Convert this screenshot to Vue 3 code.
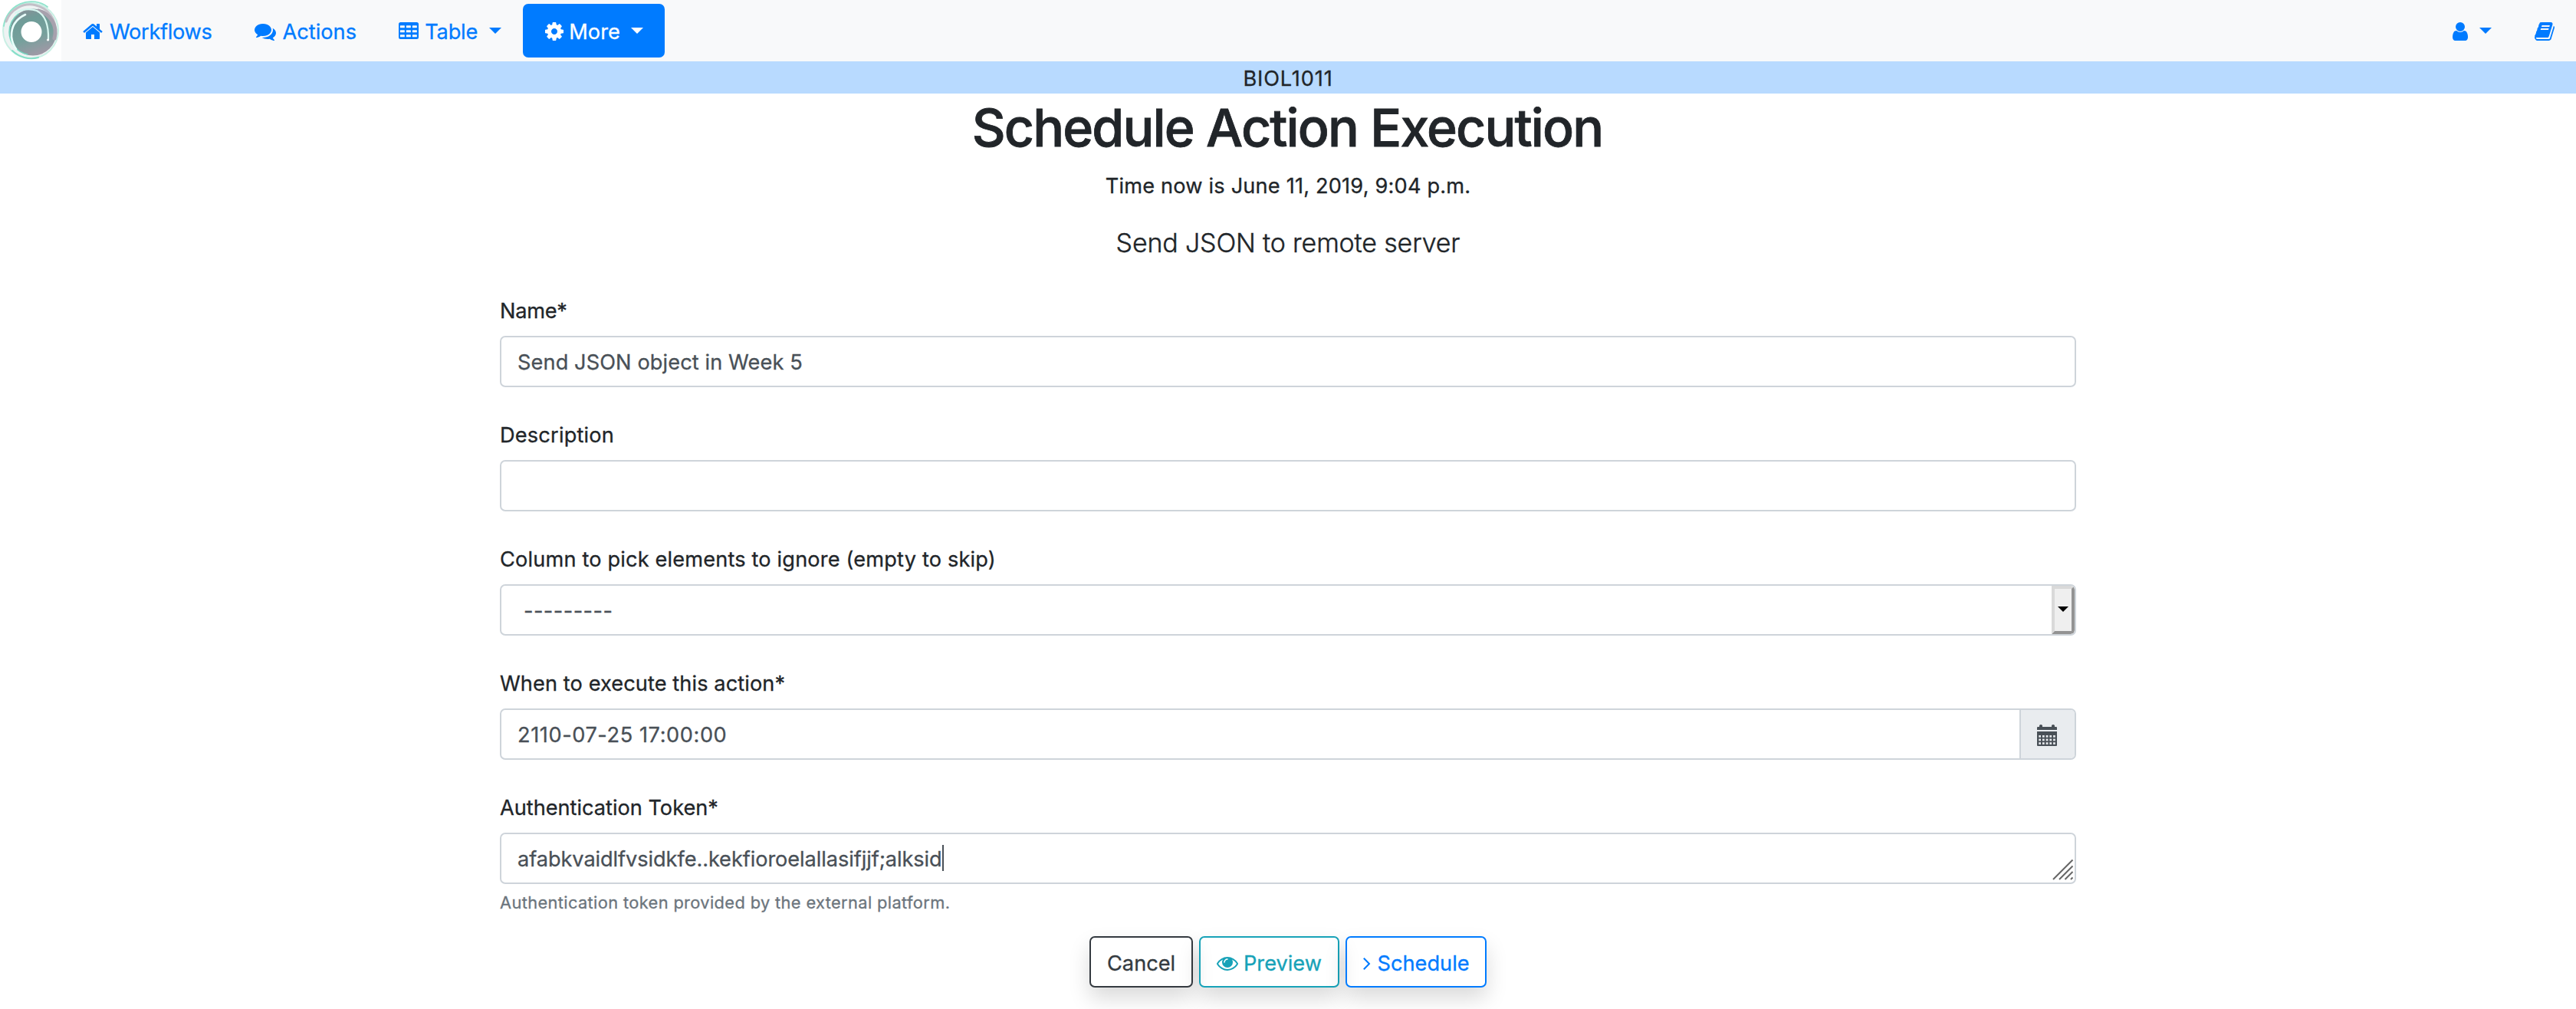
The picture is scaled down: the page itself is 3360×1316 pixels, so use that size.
<script setup>
import { ref } from 'vue'

const icons = {
  home: 'M1472 992v480q0 26-19 45t-45 19h-384v-384h-256v384h-384q-26 0-45-19t-19-45v-480q0-1 .5-3t.5-3l575-474 575 474q1 2 1 6zm223-69l-62 74q-8 9-21 11h-3q-13 0-21-7l-692-577-692 577q-12 8-24 7-13-2-21-11l-62-74q-8-10-7-23.5t11-21.5l719-599q32-26 76-26t76 26l244 204v-195q0-14 9-23t23-9h192q14 0 23 9t9 23v408l219 182q10 8 11 21.5t-7 23.5z',
  comments: 'M1408 768q0 139-94 257t-256.5 186.5-353.5 68.5q-86 0-176-16-124 88-278 128-36 9-86 16h-3q-11 0-20.5-8t-11.5-21q-1-3-1-6.5t.5-6.5 2-6l2.5-5 3.5-5.5 4-5 4.5-5 4-4.5q5-6 23-25t26-29.5 22.5-29 25-38.5 20.5-44q-124-72-195-177t-71-224q0-139 94-257t256.5-186.5 353.5-68.5 353.5 68.5 256.5 186.5 94 257zm384 256q0 120-71 224.5t-195 176.5q10 24 20.5 44t25 38.5 22.5 29 26 29.5 23 25q1 1 4 4.5t4.5 5 4 5 3.5 5.5l2.5 5 2 6 .5 6.5-1 6.5q-3 14-13 22t-22 7q-50-7-86-16-154-40-278-128-90 16-176 16-271 0-472-132 58 4 88 4 161 0 309-45t264-129q125-92 192-212t67-254q0-77-23-152 129 71 204 178t75 230z',
  cog: 'M1152 896q0-106-75-181t-181-75-181 75-75 181 75 181 181 75 181-75 75-181zm512-109v222q0 12-8 23t-20 13l-185 28q-19 54-39 91 35 50 107 138 10 12 10 25t-9 23q-27 37-99 108t-94 71q-12 0-26-9l-138-108q-44 23-91 38-16 136-29 186-7 28-36 28h-222q-14 0-24.5-8.5t-11.5-21.5l-28-184q-49-16-90-37l-141 107q-10 9-25 9-14 0-25-11-126-114-165-168-7-10-7-23 0-12 8-23 15-21 51-66.5t54-70.5q-27-50-41-99l-183-27q-13-2-21-12.5t-8-23.5v-222q0-12 8-23t19-13l186-28q14-46 39-92-40-57-107-138-10-12-10-24 0-10 9-23 26-36 98.500-107.500t94.500-71.500q13 0 26 10l138 107q44-23 91-38 16-136 29-186 7-28 36-28h222q14 0 24.500 8.500t11.500 21.500l28 184q49 16 90 37l142-107q9-9 24-9 13 0 25 10 129 119 165 170 7 8 7 22 0 12-8 23-15 21-51 66.500t-54 70.500q26 50 41 98l183 28q13 2 21 12.500t8 23.500z',
  user: 'M1536 1399q0 109-62.500 187t-150.500 78h-854q-88 0-150.500-78t-62.500-187q0-85 8.500-160.500t31.500-152 58.500-131 94-89 134.500-34.500q131 128 313 128t313-128q76 0 134.500 34.500t94 89 58.500 131 31.500 152 8.500 160.500zm-256-887q0 159-112.500 271.500t-271.500 112.500-271.500-112.500-112.500-271.500 112.500-271.500 271.500-112.500 271.500 112.500 112.500 271.500z',
  book: 'M1703 478q40 57 18 129l-275 906q-19 64-76.500 107.500t-122.500 43.500h-923q-77 0-148.500-53.500t-99.500-131.500q-24-67-2-127 0-4 3-27t4-37q1-8-3-21.500t-3-19.500q2-11 8-21t16.500-23.500 16.500-23.500q23-38 45-91.500t30-91.500q3-10 .5-30t-.5-28q3-11 17-28t17-23q21-36 42-92t25-90q1-9-2.500-32t.5-28q4-13 22-30.500t22-22.500q19-26 42.500-84.500t27.500-96.500q1-8-3-25.500t-2-26.500q2-8 9-18t18-23 17-21q8-12 16.500-30.500t15-35 16-36 19.500-32 26.500-23.500 36-11.500 47.500 5.500l-1 3q38-9 51-9h761q74 0 114 56t18 130l-274 906q-36 119-71.500 153.500t-128.500 34.500h-869q-27 0-38 15-11 16-1 43 24 70 144 70h923q29 0 56-15.500t35-41.500l300-987q7-22 5-57 38 15 59 43zm-1064 2q-4 13 2 22.500t20 9.500h608q13 0 25.500-9.500t16.500-22.500l21-64q4-13-2-22.500t-20-9.500h-608q-13 0-25.500 9.500t-16.500 22.500zm-83 256q-4 13 2 22.500t20 9.500h608q13 0 25.500-9.500t16.500-22.500l21-64q4-13-2-22.500t-20-9.500h-608q-13 0-25.500 9.500t-16.500 22.500z',
  eye: 'M1664 960q-152-236-381-353 61 104 61 225 0 185-131.500 316.500t-316.500 131.500-316.500-131.500-131.500-316.500q0-121 61-225-229 117-381 353 133 205 333.500 326.500t434.500 121.500 434.500-121.500 333.500-326.500zm-720-384q0-20-14-34t-34-14q-125 0-214.500 89.500t-89.500 214.500q0 20 14 34t34 14 34-14 14-34q0-86 61-147t147-61q20 0 34-14t14-34zm848 384q0 34-20 69-140 230-376.500 368.500t-499.500 138.500-499.500-139-376.500-368q-20-35-20-69t20-69q140-229 376.500-368t499.500-139 499.500 139 376.500 368q20 35 20 69z',
  angle: 'M1171 960q0 13-10 23l-466 466q-10 10-23 10t-23-10l-50-50q-10-10-10-23t10-23l393-393-393-393q-10-10-10-23t10-23l50-50q10-10 23-10t23 10l466 466q10 10 10 23z',
}

// Table glyph: rounded frame with a 3 x 3 grid of cut-out cells
const cell = (x, y) => `M${x + 32} ${y}h320q32 0 32 32v128q0 32-32 32h-320q-32 0-32-32v-128q0-32 32-32z`
const cells = [192, 704, 1216].flatMap((x) => [384, 768, 1152].map((y) => cell(x - 10, y + 20))).join('')
icons.table = 'M224 128h1344q160 0 160 160v1088q0 160-160 160h-1344q-160 0-160-160v-1088q0-160 160-160z' + cells

const name = ref('Send JSON object in Week 5')
const when = ref('2110-07-25 17:00:00')
const token = ref('afabkvaidlfvsidkfe..kekfioroelallasifjjf;alksid')
</script>

<template>
  <div class="page">
    <nav class="navbar">
      <svg class="logo" viewBox="0 0 80 80">
        <defs>
          <linearGradient id="disc" x1="0.25" y1="0" x2="0.6" y2="1">
            <stop offset="0" stop-color="#8b8f98" />
            <stop offset="0.25" stop-color="#6f9c98" />
            <stop offset="0.62" stop-color="#76a09c" />
            <stop offset="1" stop-color="#a198a6" />
          </linearGradient>
          <filter id="soft" x="-20%" y="-20%" width="140%" height="140%">
            <feGaussianBlur stdDeviation="0.7" />
          </filter>
        </defs>
        <rect width="80" height="80" fill="#fff" />
        <g filter="url(#soft)" fill="none" stroke-linecap="round">
          <circle cx="40" cy="40" r="36" fill="#eef3f3" stroke="#c9efe4" stroke-width="2" />
          <path d="M5 34A36 36 0 0 1 62 9" stroke="#8fe3cc" stroke-width="1.800" />
          <path d="M16 66A36 36 0 0 0 50 75" stroke="#86dfc9" stroke-width="2" />
          <path d="M8 28A33 33 0 0 1 72 42" stroke="#c3bfc7" stroke-width="3" />
          <circle cx="43" cy="42" r="30.500" fill="url(#disc)" />
          <path d="M50 14A29 29 0 0 1 71 50" stroke="#a7a1ad" stroke-width="5" />
          <path d="M36 71A30 30 0 0 1 12 42A30 30 0 0 1 24 18" stroke="#74d6c0" stroke-width="1.500" />
          <path d="M33 19Q14 28 15 48Q16 57 21 64" stroke="#e9fffb" stroke-width="2.600" />
          <path d="M20 17Q34 9 48 14Q64 22 63 52" stroke="#d7f7f0" stroke-width="2.200" />
          <circle cx="62.500" cy="52" r="1.500" fill="#fff" />
          <circle cx="41" cy="41.500" r="13.500" fill="#fff" />
        </g>
      </svg>
      <a class="item workflows">
        <svg class="icon" viewBox="0 0 1792 1792"><path :d="icons.home" /></svg>
        <span class="text">Workflows</span>
      </a>
      <a class="item actions">
        <svg class="icon" viewBox="0 0 1792 1792"><path :d="icons.comments" /></svg>
        <span class="text">Actions</span>
      </a>
      <a class="item table">
        <svg class="icon" viewBox="0 0 1792 1792"><path fill-rule="evenodd" :d="icons.table" /></svg>
        <span class="text">Table</span>
        <i class="caret"></i>
      </a>
      <a class="item more">
        <svg class="icon" viewBox="0 0 1792 1792"><path :d="icons.cog" /></svg>
        <span class="text">More</span>
        <i class="caret"></i>
      </a>
      <a class="item user">
        <svg class="icon" viewBox="0 0 1792 1792"><path :d="icons.user" /></svg>
        <i class="caret"></i>
      </a>
      <a class="item book">
        <svg class="icon" viewBox="0 0 1792 1792"><path :d="icons.book" /></svg>
      </a>
    </nav>

    <div class="workflow-name">BIOL1011</div>

    <h1>Schedule Action Execution</h1>
    <p class="now">Time now is June 11, 2019, 9:04 p.m.</p>
    <p class="lead">Send JSON to remote server</p>

    <form class="form">
      <div class="group">
        <label class="l-name">Name*</label>
        <div class="control v-name">{{ name }}</div>
      </div>
      <div class="group">
        <label class="l-desc">Description</label>
        <div class="control"></div>
      </div>
      <div class="group">
        <label class="l-col">Column to pick elements to ignore (empty to skip)</label>
        <div class="control select">
          <span>---------</span>
          <div class="drop"><i></i></div>
        </div>
      </div>
      <div class="group">
        <label class="l-when">When to execute this action*</label>
        <div class="control date">
          <span>{{ when }}</span>
          <div class="addon">
            <svg viewBox="0 0 26 28">
              <path d="M0 9V27a1 1 0 0 0 1 1H25a1 1 0 0 0 1-1V9z" fill="#495057" />
              <path d="M0 7V4a1 1 0 0 1 1-1H3V1.500Q3 0 5 0T7 1.500V3H19V1.500Q19 0 21 0T23 1.500V3H25a1 1 0 0 1 1 1V7z" fill="#495057" />
              <g fill="#e9ecef">
                <template v-for="r in 3" :key="r">
                  <rect v-for="c in 5" :key="c" :x="c * 4.7 - 2.4" :y="r * 4.6 + 9.4" width="2.700" height="2.700" />
                </template>
              </g>
            </svg>
          </div>
        </div>
      </div>
      <div class="group">
        <label class="l-token">Authentication Token*</label>
        <div class="control token">
          <span>{{ token }}</span><i class="cursor"></i>
          <svg class="grip" viewBox="0 0 28 28">
            <path d="M1 27L26.500 1.500M9 27L26.500 9.500M16.500 27L26.500 17M24 27L26.500 24.500" />
          </svg>
        </div>
        <small>Authentication token provided by the external platform.</small>
      </div>
    </form>

    <div class="buttons">
      <button class="btn cancel"><span>Cancel</span></button>
      <button class="btn preview">
        <svg class="icon" viewBox="0 0 1792 1792"><path :d="icons.eye" /></svg>
        <span>Preview</span>
      </button>
      <button class="btn schedule">
        <svg class="icon" viewBox="0 0 1792 1792"><path :d="icons.angle" /></svg>
        <span>Schedule</span>
      </button>
    </div>
  </div>
</template>

<style>
body {
  background: #fff;
  overflow: hidden;
}
</style>

<style scoped>
.page {
  height: 1316px;
  overflow: hidden;
  color: #212529;
  font: 400 27.2px/43px Inter, "Liberation Sans", sans-serif;
  -webkit-text-stroke: 0.3px currentColor;
}
.page * {
  box-sizing: border-box;
}
svg {
  display: block;
  flex: none;
}
.navbar {
  display: flex;
  height: 80px;
  background: #f8f9fa;
}
.logo {
  width: 80px;
  height: 80px;
}
.item {
  display: flex;
  align-items: flex-start;
  flex: none;
  height: 70px;
  margin-top: 5px;
  color: #007bff;
  white-space: nowrap;
}
.icon {
  width: 28px;
  height: 28px;
  fill: currentColor;
}
.item .icon {
  margin-top: 22px;
}
.item .text {
  margin-top: 15px;
}
.caret {
  flex: none;
  margin-top: 31px;
  border: 8px solid transparent;
  border-top-color: currentColor;
  border-bottom: 0;
}
.workflows {
  width: 225px;
  margin-left: 27px;
  gap: 8px;
  letter-spacing: -0.32px;
}
.actions {
  width: 187px;
  gap: 8.500px;
}
.table {
  width: 163px;
  gap: 7.2px;
  letter-spacing: -0.189px;
}
.table .caret {
  margin-left: 7.500px;
}
.more {
  width: 185px;
  padding-left: 26.600px;
  gap: 5.700px;
  border-radius: 7px;
  background: #007bff;
  color: #fff;
}
.more .caret {
  margin-left: 8.500px;
}
.user {
  width: 110px;
  margin-left: auto;
  gap: 11px;
}
.book {
  width: 55px;
}
.workflow-name {
  height: 42px;
  padding-top: 1px;
  background: #b8daff;
  text-align: center;
  letter-spacing: 0.85px;
}
h1 {
  margin: 2px 2px 0 0;
  font-size: 68px;
  font-weight: 500;
  line-height: 84px;
  letter-spacing: -1.87px;
  text-align: center;
  -webkit-text-stroke-width: 0.8px;
}
.now {
  margin: 13px 0 0;
  text-align: center;
  letter-spacing: 0.179px;
}
.lead {
  margin: 26px 0 0;
  font-size: 34px;
  font-weight: 300;
  line-height: 53px;
  letter-spacing: -0.172px;
  text-align: center;
  -webkit-text-stroke-width: 0.4px;
}
.form {
  width: 2056px;
  margin: 41px auto 0;
}
.group + .group {
  margin-top: 41px;
}
label {
  display: block;
  margin-bottom: 11px;
}
.l-name {
  letter-spacing: -0.279px;
}
.l-desc {
  letter-spacing: 0.18px;
}
.l-col {
  letter-spacing: 0.152px;
}
.l-when {
  letter-spacing: 0.08px;
}
.l-token {
  letter-spacing: -0.02px;
}
.control {
  display: flex;
  height: 67px;
  padding: 11px 0 0 21px;
  border: 2px solid #ced4da;
  border-radius: 7px;
  background: #fff;
  color: #495057;
}
.v-name {
  letter-spacing: 0.09px;
}
.select,
.date {
  justify-content: space-between;
  padding-top: 0;
  overflow: hidden;
}
.select span,
.date span {
  margin-top: 11px;
}
.select {
  padding-left: 29px;
  letter-spacing: 0.42px;
}
.drop {
  display: flex;
  justify-content: center;
  width: 30px;
  height: 63px;
  padding-top: 23px;
  border: 4px solid;
  border-color: #d9d9d9 #939393 #939393 #d9d9d9;
  border-radius: 0 5px 5px 0;
  background: #efefef;
}
.drop i {
  height: 0;
  border: 7px solid transparent;
  border-top-color: #000;
  border-bottom: 0;
}
.date {
  letter-spacing: 0.57px;
}
.addon {
  width: 72px;
  height: 63px;
  padding: 19px 0 0 21px;
  border-left: 2px solid #ced4da;
  background: #e9ecef;
}
.addon svg {
  width: 26px;
  height: 28px;
}
.token {
  letter-spacing: -0.085px;
}
.cursor {
  width: 2px;
  height: 34px;
  margin-top: 3px;
  background: #495057;
}
.grip {
  width: 28px;
  height: 28px;
  margin: 21px 1px 0 auto;
  fill: none;
  stroke: #666;
  stroke-width: 2;
}
small {
  display: block;
  margin-top: 7px;
  color: #6c757d;
  font-size: 21.800px;
  line-height: 34px;
  letter-spacing: 0.375px;
}
.buttons {
  display: flex;
  justify-content: center;
  gap: 8px;
  margin-top: 27px;
}
.btn {
  display: flex;
  height: 67px;
  padding: 0 0 0 21px;
  border: 2px solid currentColor;
  border-radius: 7px;
  background: transparent;
  box-shadow: 0 14px 28px rgba(0, 0, 0, 0.15);
  font: inherit;
  white-space: nowrap;
}
.btn span {
  margin-top: 12px;
}
.btn .icon {
  margin-top: 19px;
}
.cancel {
  width: 135px;
  color: #343a40;
}
.preview {
  width: 183px;
  gap: 7px;
  color: #17a2b8;
}
.schedule {
  width: 184px;
  padding-left: 11.500px;
  color: #007bff;
}
</style>
